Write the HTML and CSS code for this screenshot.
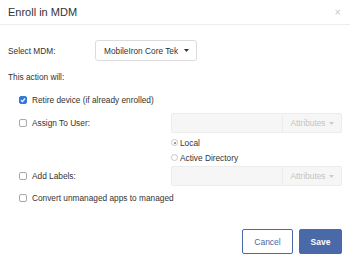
FILE: index.html
```html
<!DOCTYPE html>
<html>
<head>
  <title>Enroll in MDM</title>
  <meta charset="UTF-8">
  <link rel="stylesheet" href="styles.css">
</head>
<body>
  <div class="modal">
    <div class="modal-header">
      <span class="modal-title">Enroll in MDM</span>
      <span class="close">&times;</span>
    </div>

    <div class="modal-body">
      <div class="select-row">
        <span class="select-label">Select MDM:</span>
        <div class="select">
          <span>MobileIron Core Tek</span>
          <svg class="caret" width="5" height="3" viewBox="0 0 5 3"><path d="M0 0h5L2.5 3z" fill="#333"/></svg>
        </div>
      </div>

      <p class="intro">This action will:</p>

      <div class="options">
        <div class="opt opt-retire">
          <span class="check checked">
            <svg width="6" height="6" viewBox="0 0 6 6"><path d="M1 3.2l1.4 1.4L5 1.5" fill="none" stroke="#fff" stroke-width="1.2"/></svg>
          </span>
          <span>Retire device (if already enrolled)</span>
        </div>

        <div class="opt opt-field">
          <div class="opt-label"><span class="check"></span><span>Assign To User:</span></div>
          <div class="field">
            <div class="field-input"></div>
            <div class="field-addon">Attributes <svg width="5" height="3" viewBox="0 0 5 3"><path d="M0 0h5L2.5 3z" fill="#ccc"/></svg></div>
          </div>
        </div>

        <div class="radios">
          <div class="radio-row"><span class="radio on"></span><span>Local</span></div>
          <div class="radio-row"><span class="radio"></span><span>Active Directory</span></div>
        </div>

        <div class="opt opt-field opt-labels">
          <div class="opt-label"><span class="check"></span><span>Add Labels:</span></div>
          <div class="field">
            <div class="field-input"></div>
            <div class="field-addon">Attributes <svg width="5" height="3" viewBox="0 0 5 3"><path d="M0 0h5L2.5 3z" fill="#ccc"/></svg></div>
          </div>
        </div>

        <div class="opt opt-convert">
          <span class="check"></span>
          <span>Convert unmanaged apps to managed</span>
        </div>
      </div>
    </div>

    <div class="modal-footer">
      <button class="btn btn-cancel">Cancel</button>
      <button class="btn btn-save">Save</button>
    </div>
  </div>
</body>
</html>
```

FILE: styles.css
```css
body {
  margin: 0;
  background-color: #fff;
  font-family: "Liberation Sans", Arial, sans-serif;
  color: #333;
  font-size: 8.3px;
}
.modal {
  width: 350px;
  height: 261px;
}
.modal-header {
  height: 24px;
  padding: 0 9px 0 8px;
  display: flex;
  align-items: center;
  justify-content: space-between;
  border-bottom: 1px solid #eeeeee;
}
.modal-title {
  font-size: 11px;
  color: #333;
}
.close {
  font-size: 11px;
  color: #c8c8c8;
}
.modal-body {
  padding: 0 8px;
}
.select-row {
  display: flex;
  align-items: center;
  margin-top: 15px;
}
.select-label {
  width: 87px;
}
.select {
  width: 102px;
  height: 21px;
  box-sizing: border-box;
  border: 1px solid #dcdcdc;
  border-radius: 3px;
  padding: 0 7px 0 8px;
  display: flex;
  align-items: center;
  justify-content: space-between;
}
.intro {
  margin: 11px 0 0 0;
  line-height: 10px;
}
.options {
  padding-left: 11px;
  display: flex;
  flex-direction: column;
}
.opt {
  display: flex;
  align-items: center;
}
.opt-retire {
  height: 20px;
  margin-top: 8px;
}
.opt-field {
  height: 20px;
  margin-top: 3px;
  justify-content: space-between;
}
.opt-labels {
  margin-top: 1px;
}
.opt-convert {
  height: 14px;
  margin-top: 5px;
}
.opt-label {
  display: flex;
  align-items: center;
}
.check {
  width: 8px;
  height: 8px;
  box-sizing: border-box;
  border: 1px solid #a8a8a8;
  border-radius: 2px;
  margin-right: 5px;
  display: flex;
  align-items: center;
  justify-content: center;
}
.check.checked {
  background-color: #3479d8;
  border-color: #3479d8;
}
.field {
  width: 171px;
  height: 20px;
  box-sizing: border-box;
  border: 1px solid #ececec;
  border-radius: 2px;
  background-color: #f6f6f6;
  display: flex;
}
.field-input {
  flex: 1;
}
.field-addon {
  width: 58px;
  border-left: 1px solid #ececec;
  color: #c4c4c4;
  display: flex;
  align-items: center;
  justify-content: center;
  gap: 3px;
}
.radios {
  margin-left: 152px;
  margin-top: 2px;
}
.radio-row {
  height: 15px;
  display: flex;
  align-items: center;
}
.radio {
  width: 7px;
  height: 7px;
  box-sizing: border-box;
  border: 1px solid #c6c6c6;
  border-radius: 50%;
  margin-right: 2px;
  display: flex;
  align-items: center;
  justify-content: center;
}
.radio.on::after {
  content: "";
  width: 2px;
  height: 2px;
  border-radius: 50%;
  background-color: #777;
}
.modal-footer {
  display: flex;
  justify-content: flex-end;
  gap: 6px;
  padding: 0 8px;
  margin-top: 24px;
}
.btn {
  height: 25px;
  box-sizing: border-box;
  font-family: inherit;
  font-size: 8.5px;
  border-radius: 2px;
  padding: 0;
}
.btn-cancel {
  width: 51px;
  background-color: #fff;
  border: 1px solid #4a69a8;
  color: #4a69a8;
}
.btn-save {
  width: 43px;
  background-color: #4a69a8;
  border: 1px solid #4a69a8;
  color: #fff;
  font-weight: bold;
}
```
